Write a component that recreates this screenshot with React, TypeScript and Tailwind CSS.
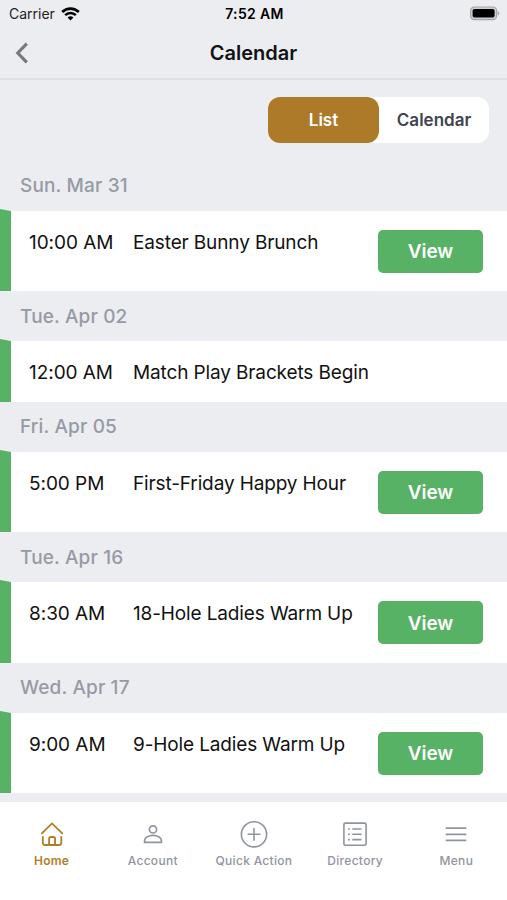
import type { ReactNode } from 'react';
import clsx from 'clsx';

type CalendarEvent = {
  date: string;
  time: string;
  title: string;
  viewable: boolean;
};

const events: CalendarEvent[] = [
  { date: 'Sun. Mar 31', time: '10:00 AM', title: 'Easter Bunny Brunch', viewable: true },
  { date: 'Tue. Apr 02', time: '12:00 AM', title: 'Match Play Brackets Begin', viewable: false },
  { date: 'Fri. Apr 05', time: '5:00 PM', title: 'First-Friday Happy Hour', viewable: true },
  { date: 'Tue. Apr 16', time: '8:30 AM', title: '18-Hole Ladies Warm Up', viewable: true },
  { date: 'Wed. Apr 17', time: '9:00 AM', title: '9-Hole Ladies Warm Up', viewable: true },
];

function StatusBar() {
  return (
    <div className="grid h-[27px] grid-cols-3 items-center pr-[7px] pl-[9px] text-black">
      <div className="flex items-center gap-1.5">
        <span className="text-[14px] text-[#222]">Carrier</span>
        <svg className="h-[14px] w-[19px]" viewBox="0 0 19 14" fill="none" stroke="currentColor" strokeWidth="2.6" aria-hidden="true">
          <path d="M1.2 5a11.8 11.8 0 0 1 16.6 0" />
          <path d="M4.2 8.2a7.5 7.5 0 0 1 10.6 0" />
          <path d="M9.5 13.6 6.6 10.6a4.2 4.2 0 0 1 5.8 0z" fill="currentColor" stroke="none" />
        </svg>
      </div>
      <span className="text-center text-[14px] font-semibold tracking-[0.35px]">7:52 AM</span>
      <svg className="h-[15px] w-[31px] justify-self-end" viewBox="0 0 31 15" aria-hidden="true">
        <rect x="1.6" y="1" width="26" height="12.6" rx="3.6" fill="#d0d0d3" stroke="#a5a5a8" strokeWidth="1.2" />
        <rect x="3.6" y="3" width="22" height="8.6" rx="1.8" fill="#000" />
        <path d="M28.8 5.2c2 .7 2 3.5 0 4.2z" fill="#a5a5a8" />
      </svg>
    </div>
  );
}

function Header() {
  return (
    <header className="grid h-[53px] grid-cols-[1fr_auto_1fr] items-center border-b-2 border-[#dfe0e4] pr-[7px] pl-[7px]">
      <svg className="ml-2 h-[22px] w-[14px]" viewBox="0 0 14 22" fill="none" stroke="#78797c" strokeWidth="3.2" aria-hidden="true">
        <path d="M11.8 1.7 2.8 11l9 9.3" />
      </svg>
      <h1 className="text-[20px] leading-[30px] font-semibold text-[#111214]">Calendar</h1>
    </header>
  );
}

function EventRow({ event }: { event: CalendarEvent }) {
  return (
    <section>
      <h2 className="flex h-[48px] items-center pt-[3px] pl-5 text-[19px] font-medium tracking-[0.15px] text-[#969aa5]">{event.date}</h2>
      <div
        className={clsx(
          'flex items-start border-t-[2px] border-l-[11px] border-t-[#ecedf1] border-l-[#57b265] bg-white pr-[24px] pl-[18px]',
          event.viewable ? 'h-[82.4px]' : 'h-[62.6px]',
        )}
      >
        <span className="mt-[18px] w-[104px] text-[19px] leading-[28px] tracking-[-0.05px]">{event.time}</span>
        <span className="mt-[18px] flex-1 text-[19px] leading-[28px] tracking-[-0.13px] whitespace-nowrap">{event.title}</span>
        {event.viewable && (
          <button type="button" className="mt-[19px] h-[43px] w-[105px] rounded-[5px] bg-[#57b265] pt-[2px] text-[19px] font-semibold tracking-[-0.1px] text-white">
            View
          </button>
        )}
      </div>
    </section>
  );
}

function Tab({ label, active = false, children }: { label: string; active?: boolean; children: ReactNode }) {
  return (
    <a className={clsx('flex w-[101.2px] flex-col items-center whitespace-nowrap', active ? 'font-semibold text-[#b17d29]' : 'font-medium text-[#9194a0]')}>
      <svg className="size-[30px]" viewBox="0 0 30 30" fill="none" stroke="currentColor" strokeWidth="1.6" aria-hidden="true">
        {children}
      </svg>
      <span className="mt-[4px] text-[12px] leading-[15px] tracking-[0.3px]">{label}</span>
    </a>
  );
}

function TabBar() {
  return (
    <nav className="flex h-[98px] bg-white pt-[17px] pl-[1px]">
      <Tab label="Home" active>
        <path d="M4.3 14.9 15 4.4l10.8 10.5" strokeWidth="1.8" />
        <path d="M5.8 17.2v6.6a2.2 2.2 0 0 0 2.2 2.2h2.4a1.7 1.7 0 0 0 1.7-1.700v-4.500a1.800 1.800 0 0 1 1.800-1.800h2.400a1.800 1.800 0 0 1 1.800 1.800V26M12.100 26h10a2.200 2.200 0 0 0 2.200-2.200v-6.600" strokeWidth="1.8" />
      </Tab>
      <Tab label="Account">
        <circle cx="15" cy="10.400" r="3.600" strokeWidth="1.700" />
        <path d="M6.600 23.300v-1.900c0-2.900 4.400-5 8.400-5s8.400 2.100 8.400 5v1.900z" strokeWidth="1.700" />
      </Tab>
      <Tab label="Quick Action">
        <circle cx="15" cy="15.300" r="12.600" />
        <path d="M15 8.900v12.800M8.600 15.300h12.800" />
      </Tab>
      <Tab label="Directory">
        <rect x="3.900" y="4.100" width="22.200" height="22.200" rx="1.500" />
        <path d="M8 10h1.800M8 15.300h1.800M8 20.600h1.800M12.300 10h9.200M12.300 15.300h9.200M12.300 20.600h9.200" />
      </Tab>
      <Tab label="Menu">
        <path d="M4.700 9.200h20.600M4.700 15.300h20.600M4.700 21.400h20.600" strokeWidth="1.800" />
      </Tab>
    </nav>
  );
}

export default function App() {
  return (
    <div className="flex h-[900px] w-[507px] flex-col overflow-hidden bg-[#ecedf1] font-['Inter',sans-serif] text-[#111]">
      <StatusBar />
      <Header />
      <main className="flex-1">
        <div className="flex h-[81.1px] justify-end pt-[17px] pr-[18px]">
          <div className="flex h-[46px] w-[221px] rounded-[12px] bg-white text-[17px] font-semibold">
            <button type="button" className="w-[111px] rounded-[12px] bg-[#ad7a29] pt-[2px] text-white">
              List
            </button>
            <button type="button" className="w-[110px] pt-[2px] text-[#414450]">
              Calendar
            </button>
          </div>
        </div>
        {events.map((event) => (
          <EventRow key={event.date} event={event} />
        ))}
      </main>
      <TabBar />
    </div>
  );
}
